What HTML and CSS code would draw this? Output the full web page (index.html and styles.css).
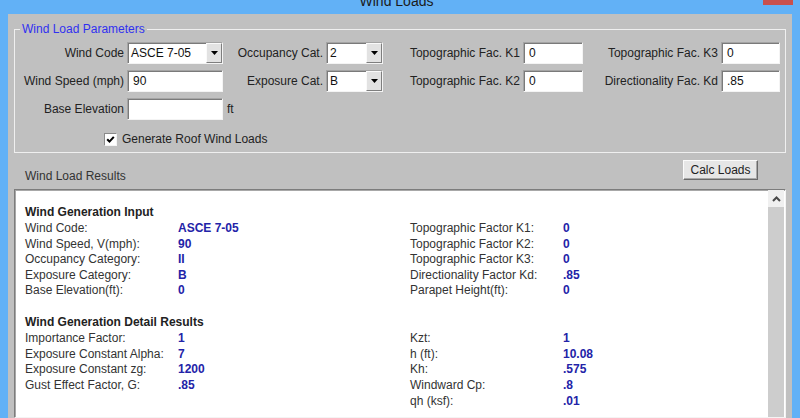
FILE: index.html
```html
<!DOCTYPE html>
<html>
<head>
<meta charset="utf-8">
<title>Wind Loads</title>
<link rel="stylesheet" href="styles.css">
</head>
<body>
<div class="window">
  <div class="titlebar">
    <div class="tb-side"></div>
    <div class="tb-title">Wind Loads</div>
    <div class="tb-side tb-right"><div class="close"></div></div>
  </div>
  <div class="frame">
    <div class="client">
      <fieldset class="group">
        <legend>Wind Load Parameters</legend>
        <div class="params">
          <div class="lbl">Wind Code</div>
          <div class="field combo"><span>ASCE 7-05</span><i class="drop"><svg width="7" height="4" viewBox="0 0 7 4"><polygon points="0,0 7,0 3.5,4" fill="#000"/></svg></i></div>
          <div class="lbl">Occupancy Cat.</div>
          <div class="field combo"><span>2</span><i class="drop"><svg width="7" height="4" viewBox="0 0 7 4"><polygon points="0,0 7,0 3.5,4" fill="#000"/></svg></i></div>
          <div class="lbl">Topographic Fac. K1</div>
          <div class="field">0</div>
          <div class="lbl">Topographic Fac. K3</div>
          <div class="field">0</div>

          <div class="lbl">Wind Speed (mph)</div>
          <div class="field">90</div>
          <div class="lbl">Exposure Cat.</div>
          <div class="field combo"><span>B</span><i class="drop"><svg width="7" height="4" viewBox="0 0 7 4"><polygon points="0,0 7,0 3.5,4" fill="#000"/></svg></i></div>
          <div class="lbl">Topographic Fac. K2</div>
          <div class="field">0</div>
          <div class="lbl">Directionality Fac. Kd</div>
          <div class="field">.85</div>

          <div class="lbl">Base Elevation</div>
          <div class="field"></div>
          <div class="unit">ft</div>
        </div>
        <div class="check-row">
          <span class="checkbox"><svg width="9" height="9" viewBox="0 0 9 9"><path d="M1.2 4.2 L3.5 6.6 L7.8 1.8" fill="none" stroke="#000" stroke-width="2"/></svg></span>
          <span>Generate Roof Wind Loads</span>
        </div>
      </fieldset>

      <div class="results-head">
        <span class="rh-label">Wind Load Results</span>
        <button class="calc">Calc Loads</button>
      </div>

      <div class="panel">
        <div class="report">
          <div class="rgrid">
            <div class="rh">Wind Generation Input</div>
            <div class="l">Wind Code:</div><div class="v">ASCE 7-05</div><div class="l">Topographic Factor K1:</div><div class="v">0</div>
            <div class="l">Wind Speed, V(mph):</div><div class="v">90</div><div class="l">Topographic Factor K2:</div><div class="v">0</div>
            <div class="l">Occupancy Category:</div><div class="v">II</div><div class="l">Topographic Factor K3:</div><div class="v">0</div>
            <div class="l">Exposure Category:</div><div class="v">B</div><div class="l">Directionality Factor Kd:</div><div class="v">.85</div>
            <div class="l">Base Elevation(ft):</div><div class="v">0</div><div class="l">Parapet Height(ft):</div><div class="v">0</div>
          </div>
          <div class="rgrid section2">
            <div class="rh">Wind Generation Detail Results</div>
            <div class="l">Importance Factor:</div><div class="v">1</div><div class="l">Kzt:</div><div class="v">1</div>
            <div class="l">Exposure Constant Alpha:</div><div class="v">7</div><div class="l">h (ft):</div><div class="v">10.08</div>
            <div class="l">Exposure Constant zg:</div><div class="v">1200</div><div class="l">Kh:</div><div class="v">.575</div>
            <div class="l">Gust Effect Factor, G:</div><div class="v">.85</div><div class="l">Windward Cp:</div><div class="v">.8</div>
            <div class="l"></div><div class="v"></div><div class="l">qh (ksf):</div><div class="v">.01</div>
          </div>
        </div>
        <div class="scrollbar">
          <div class="sb-up"><svg width="9" height="6" viewBox="0 0 9 6"><polyline points="1,5 4.5,1.5 8,5" fill="none" stroke="#4a4a4a" stroke-width="2"/></svg></div>
          <div class="sb-thumb"></div>
        </div>
      </div>
    </div>
  </div>
</div>
</body>
</html>
```

FILE: styles.css
```css
html, body {
  margin: 0;
  padding: 0;
}
body {
  width: 800px;
  height: 418px;
  overflow: hidden;
  background: #62b1f6;
  font-family: "Liberation Sans", Arial, sans-serif;
  font-size: 12px;
  color: #222;
}
.window {
  width: 800px;
  height: 418px;
}
.titlebar {
  display: flex;
  height: 14px;
  overflow: hidden;
}
.tb-side {
  flex: 1;
}
.tb-title {
  font-size: 14px;
  line-height: 14px;
  margin-top: -6px;
  color: #1b1b1b;
}
.tb-right {
  display: flex;
  justify-content: flex-end;
  align-items: flex-start;
  padding-right: 7px;
}
.close {
  width: 30px;
  height: 5px;
  background: #c9504d;
}
.frame {
  display: flex;
  height: 404px;
  padding-left: 8px;
}
.client {
  width: 784px;
  background: #c0c0c0;
  display: flex;
  flex-direction: column;
}
.group {
  margin: 8px 6px 0 6px;
  padding: 0 0 5px 0;
  border: 1px solid #efefef;
  min-width: 0;
}
.group legend {
  margin-left: 5px;
  padding: 0 2px;
  color: #3030f0;
  font-size: 12px;
  line-height: 14px;
}
.params {
  display: grid;
  grid-template-columns: 112px 96px 103px 57px 140px 60px 138px 59px;
  grid-auto-rows: 22px;
  row-gap: 6px;
  margin-top: 6px;
  align-items: center;
}
.lbl {
  text-align: right;
  padding-right: 3px;
  white-space: nowrap;
}
.unit {
  padding-left: 4px;
}
.field {
  height: 22px;
  box-sizing: border-box;
  background: #fff;
  border: 1px solid;
  border-color: #a4a4a4 #f4f4f4 #f4f4f4 #a4a4a4;
  box-shadow: inset 1px 1px 0 #7a7a7a;
  display: flex;
  align-items: center;
  padding-left: 5px;
  color: #111;
}
.combo {
  padding-left: 3px;
}
.combo span {
  flex: 1;
}
.drop {
  width: 16px;
  align-self: stretch;
  box-sizing: border-box;
  background: #e2e2e2;
  border: 1px solid;
  border-color: #fafafa #7e7e7e #7e7e7e #fafafa;
  display: flex;
  align-items: center;
  justify-content: center;
}
.check-row {
  display: flex;
  align-items: center;
  gap: 5px;
  height: 16px;
  margin-top: 11px;
  padding-left: 89px;
}
.checkbox {
  width: 13px;
  height: 13px;
  box-sizing: border-box;
  background: #fff;
  border: 1px solid;
  border-color: #8a8a8a #f4f4f4 #f4f4f4 #8a8a8a;
  display: flex;
  align-items: center;
  justify-content: center;
}
.results-head {
  display: flex;
  justify-content: space-between;
  align-items: flex-start;
  height: 36px;
  padding: 0 34px 0 17px;
  box-sizing: border-box;
}
.rh-label {
  margin-top: 16px;
  line-height: 14px;
  color: #333;
}
.calc {
  margin-top: 7px;
  width: 75px;
  height: 20px;
  padding: 0;
  font-family: inherit;
  font-size: 12px;
  color: #222;
  background: #e6e6e6;
  border: 1px solid;
  border-color: #fbfbfb #6a6a6a #6a6a6a #fbfbfb;
  box-shadow: inset -1px -1px 0 #a8a8a8;
}
.panel {
  flex: 1;
  margin-left: 6px;
  width: 772px;
  box-sizing: border-box;
  background: #fff;
  border: 1px solid;
  border-color: #7c7c7c #f4f4f4 #f4f4f4 #7c7c7c;
  box-shadow: inset 1px 1px 0 #a8a8a8;
  display: flex;
  min-height: 0;
}
.report {
  flex: 1;
  padding: 14.5px 0 0 10px;
}
.rgrid {
  display: grid;
  grid-template-columns: 153px 232px 153px 1fr;
  line-height: 15.6px;
  white-space: nowrap;
}
.section2 {
  margin-top: 15.6px;
}
.rh {
  grid-column: 1 / -1;
  font-weight: bold;
  color: #222;
  margin-bottom: 1px;
}
.l {
  color: #333;
}
.v {
  font-weight: bold;
  color: #2323a8;
}
.scrollbar {
  width: 16px;
  margin-right: 1px;
  display: flex;
  flex-direction: column;
}
.sb-up {
  height: 17px;
  background: #f0f0f0;
  display: flex;
  align-items: center;
  justify-content: center;
}
.sb-thumb {
  flex: 1;
  background: #cdcdcd;
}
```
